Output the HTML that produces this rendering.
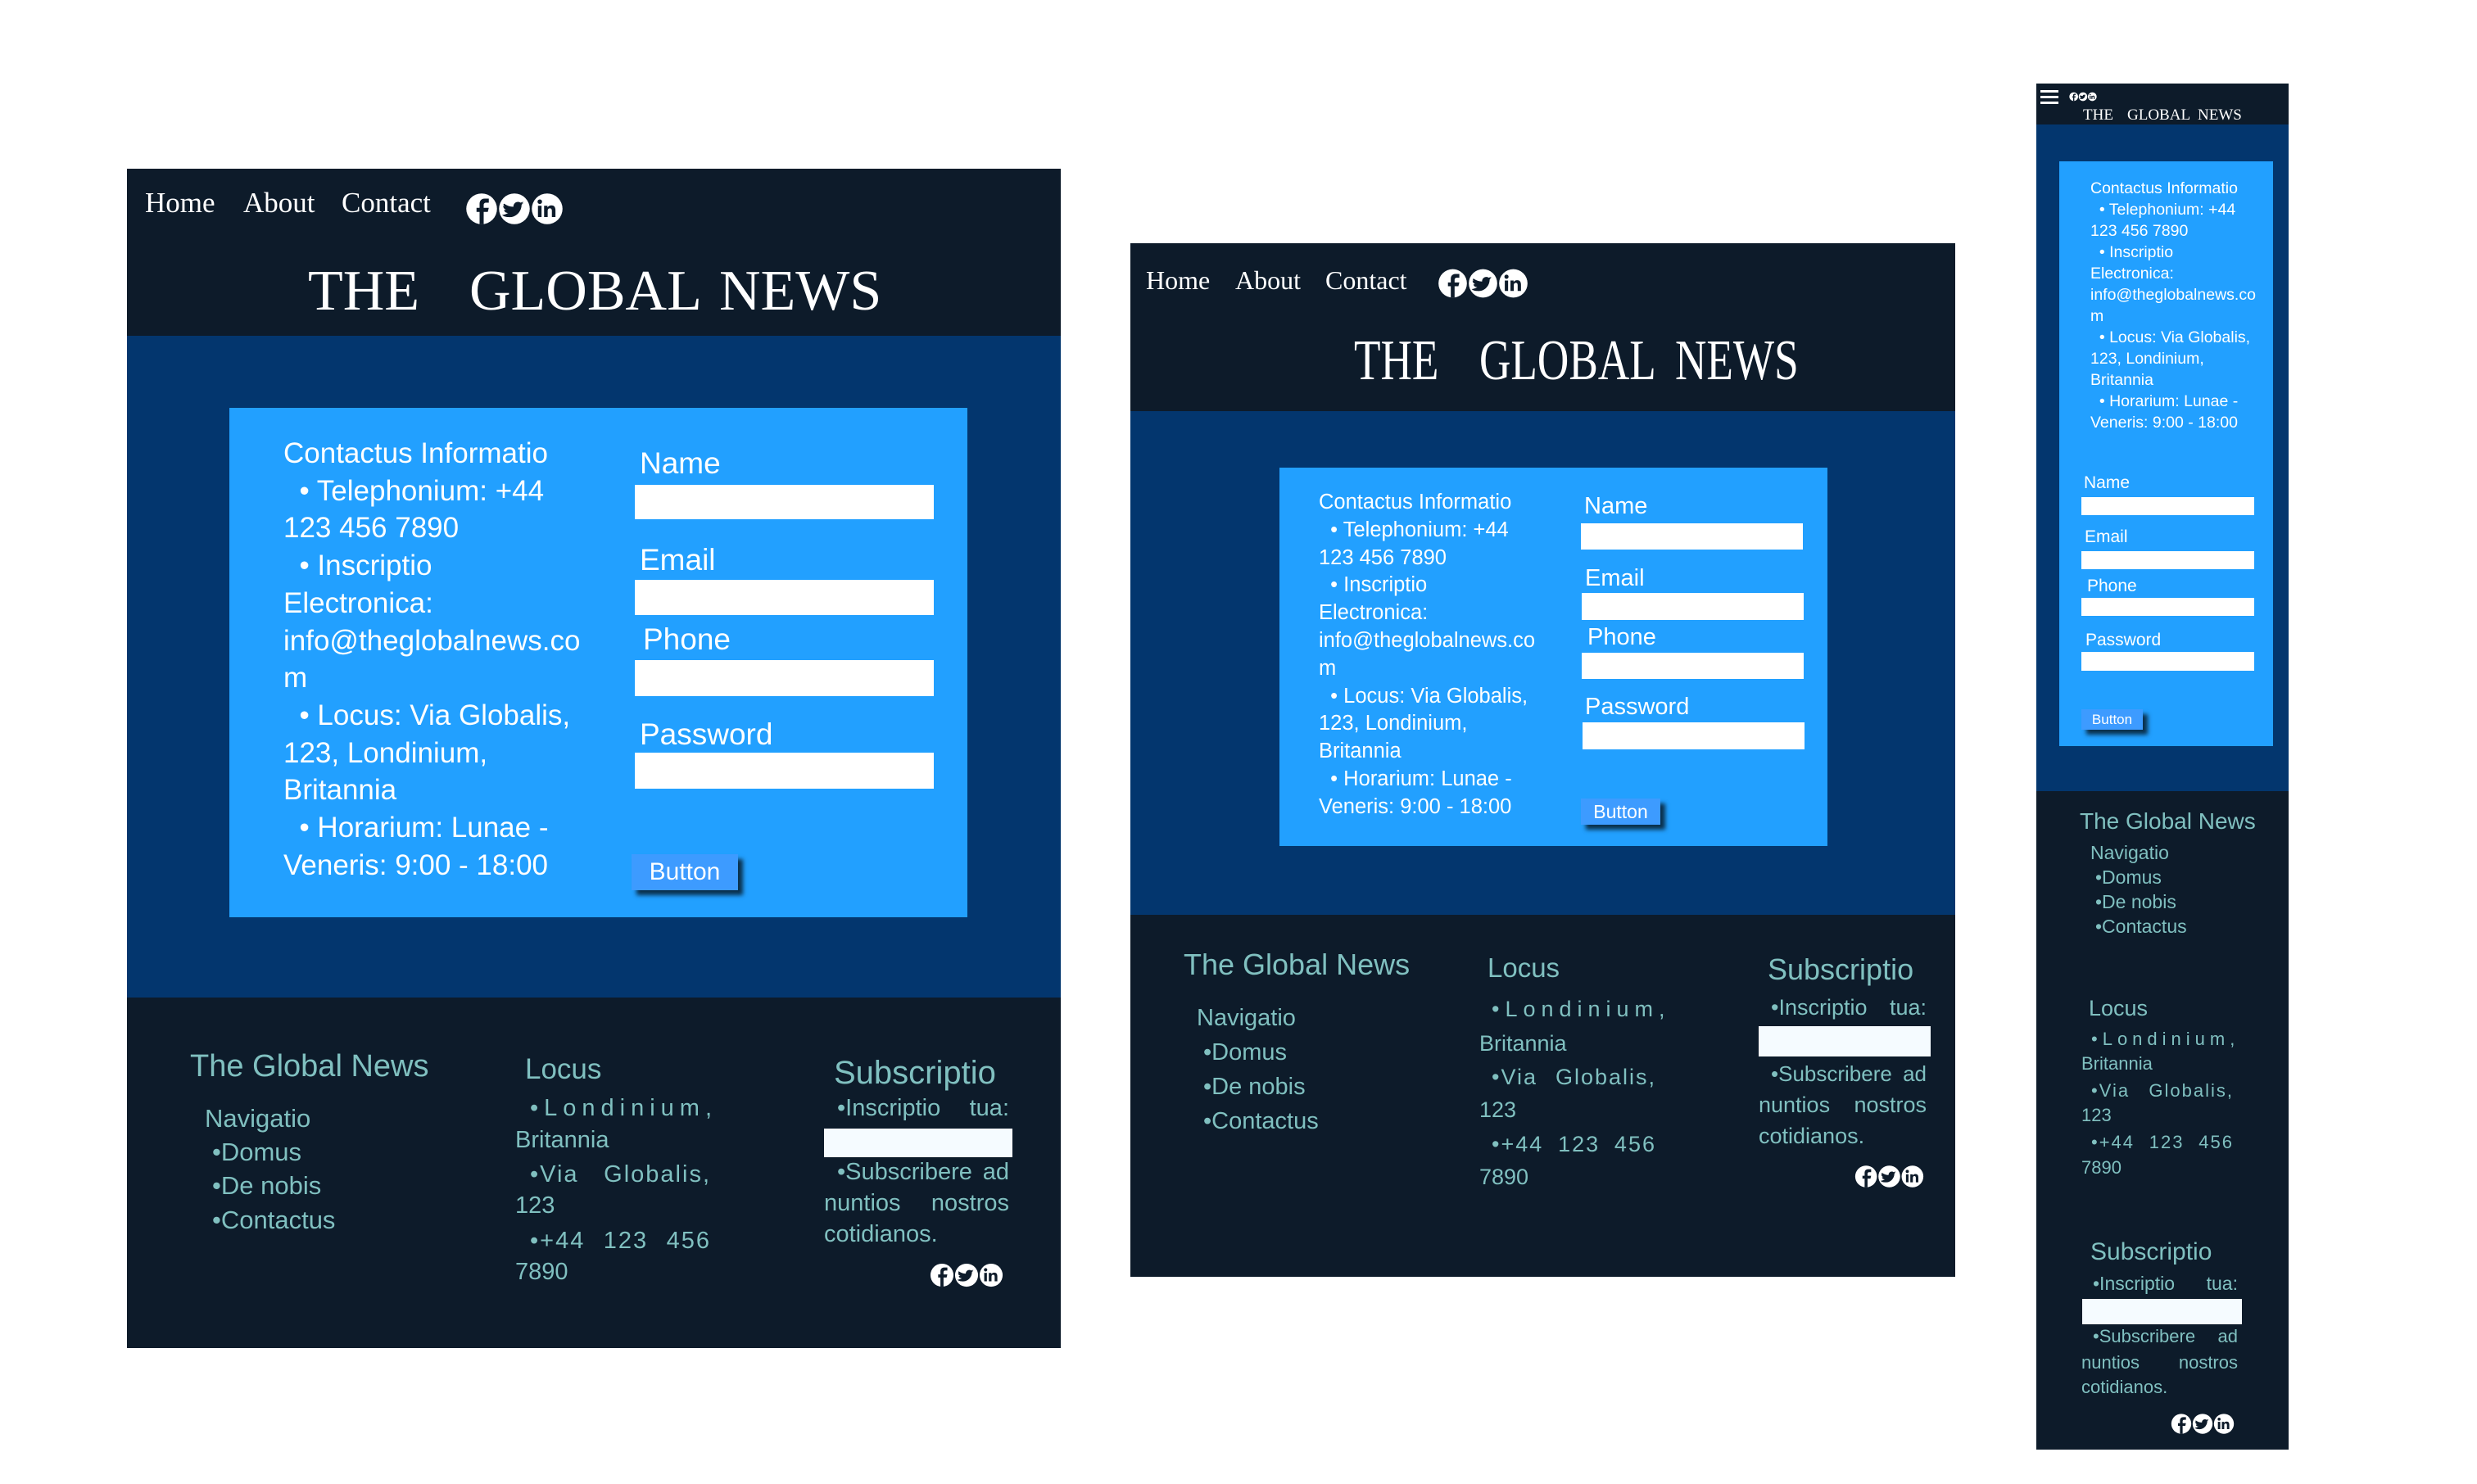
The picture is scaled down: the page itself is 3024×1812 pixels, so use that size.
<!DOCTYPE html>
<html><head><meta charset="utf-8">
<style>
*{margin:0;padding:0;box-sizing:border-box}
html,body{width:3024px;height:1812px;background:#fff;overflow:hidden;position:relative}
div,svg{position:absolute}
.t{line-height:1;white-space:pre;font-family:"Liberation Sans",sans-serif}
.s{font-family:"Liberation Serif",serif;color:#fff;line-height:1;white-space:pre}
.dk{background:#0d1b2a}
.bl{background:#03366e}
.fm{background:#22a0ff}
.w{color:#fff}
.tl{color:#80c0c0}
.in{background:#fff}
.j{line-height:1;font-family:"Liberation Sans",sans-serif;color:#80c0c0;display:flex;justify-content:space-between;white-space:nowrap}
.j span{position:static}
.btn{background:#3d9bff;color:#fff;font-family:"Liberation Sans",sans-serif;text-align:center;box-shadow:6px 6px 5px rgba(0,0,0,.7)}
.c{transform:scaleX(.76);transform-origin:0 0}
</style></head><body>
<svg width="0" height="0" style="position:absolute">
<defs>
<symbol id="ic" viewBox="0 0 96 32">
<circle cx="16" cy="16" r="15" fill="#fff"/>
<path d="M18 31V19h4l1-4h-5v-3c0-1 1-2 2-2h3V6h-4c-4 0-5 3-5 5v4h-3v4h3v12z" fill="#0d1b2a"/>
<circle cx="48" cy="16" r="15" fill="#fff"/>
<path d="M38 11c3 2 6 3 9 3 0-4 4-6 7-4l3-1-2 2 2-1-2 2c0 7-6 13-13 12-3 0-5-1-6-2 2 0 4-1 6-2-2 0-4-1-4-3h2c-2-1-3-2-3-4l2 1c-2-1-2-3-1-3z" fill="#0d1b2a"/>
<circle cx="80" cy="16" r="15" fill="#fff"/>
<rect x="71" y="13" width="3.5" height="11" fill="#0d1b2a"/>
<circle cx="72.8" cy="9" r="2.2" fill="#0d1b2a"/>
<path d="M77 13h3.3v1.6c1-1.4 2.3-2 3.8-2 3 0 4 2 4 5V24h-3.5v-6c0-1.6-.6-2.5-1.9-2.5-1.5 0-2.2 1-2.2 2.6V24H77z" fill="#0d1b2a"/>
</symbol>
</defs></svg>

<!-- PANEL 1 -->
<div class="dk" style="left:155px;top:206px;width:1140px;height:204px"></div>
<div class="bl" style="left:155px;top:410px;width:1140px;height:808px"></div>
<div class="dk" style="left:155px;top:1218px;width:1140px;height:428px"></div>
<div class="s" style="left:177px;top:230px;font-size:35px">Home</div>
<div class="s" style="left:297px;top:230px;font-size:35px">About</div>
<div class="s" style="left:417px;top:230px;font-size:35px">Contact</div>
<svg style="left:567px;top:235px" width="122" height="40"><use href="#ic"/></svg>
<div class="s" style="left:376px;top:321px;font-size:70px">THE</div>
<div class="s" style="left:573px;top:321px;font-size:70px">GLOBAL</div>
<div class="s" style="left:878px;top:321px;font-size:70px">NEWS</div>
<div class="fm" style="left:280px;top:498px;width:901px;height:622px"></div>
<div class="t w" style="left:346px;top:531px;font-size:35px;line-height:45.7px">Contactus Informatio
  • Telephonium: +44
123 456 7890
  • Inscriptio
Electronica:
info@theglobalnews.co
m
  • Locus: Via Globalis,
123, Londinium,
Britannia
  • Horarium: Lunae -
Veneris: 9:00 - 18:00</div>
<div class="t w" style="left:781px;top:547px;font-size:37px">Name</div>
<div class="in" style="left:775px;top:592px;width:365px;height:42px"></div>
<div class="t w" style="left:781px;top:665px;font-size:37px">Email</div>
<div class="in" style="left:775px;top:708px;width:365px;height:43px"></div>
<div class="t w" style="left:785px;top:762px;font-size:37px">Phone</div>
<div class="in" style="left:775px;top:806px;width:365px;height:44px"></div>
<div class="t w" style="left:781px;top:878px;font-size:37px">Password</div>
<div class="in" style="left:775px;top:919px;width:365px;height:44px"></div>
<div class="btn" style="left:771px;top:1043px;width:130px;height:44px;font-size:30px;line-height:44px">Button</div>

<div class="t tl" style="left:232px;top:1283px;font-size:38px">The Global News</div>
<div class="t tl" style="left:250px;top:1350px;font-size:31px">Navigatio</div>
<div class="t tl" style="left:259px;top:1391px;font-size:31px">•Domus</div>
<div class="t tl" style="left:259px;top:1432px;font-size:31px">•De nobis</div>
<div class="t tl" style="left:259px;top:1474px;font-size:31px">•Contactus</div>
<div class="t tl" style="left:641px;top:1288px;font-size:35px">Locus</div>
<div class="t tl" style="left:647px;top:1339px;font-size:29px;letter-spacing:7px">•Londinium,</div>
<div class="t tl" style="left:629px;top:1378px;font-size:29px">Britannia</div>
<div class="j" style="left:647px;top:1420px;width:221px;font-size:29px;letter-spacing:2px"><span>•Via</span><span>Globalis,</span></div>
<div class="t tl" style="left:629px;top:1458px;font-size:29px">123</div>
<div class="j" style="left:647px;top:1501px;width:221px;font-size:29px;letter-spacing:2px"><span>•+44</span><span>123</span><span>456</span></div>
<div class="t tl" style="left:629px;top:1539px;font-size:29px">7890</div>
<div class="t tl" style="left:1018px;top:1290px;font-size:40px">Subscriptio</div>
<div class="j" style="left:1022px;top:1339px;width:210px;font-size:29px"><span>•Inscriptio</span><span>tua:</span></div>
<div class="in" style="left:1006px;top:1378px;width:230px;height:35px;background:#f5fbff"></div>
<div class="j" style="left:1022px;top:1417px;width:210px;font-size:29px"><span>•Subscribere</span><span>ad</span></div>
<div class="j" style="left:1006px;top:1455px;width:226px;font-size:29px"><span>nuntios</span><span>nostros</span></div>
<div class="t tl" style="left:1006px;top:1493px;font-size:29px">cotidianos.</div>
<svg style="left:1133px;top:1542px" width="94" height="30"><use href="#ic"/></svg>

<!-- PANEL 2 -->
<div class="dk" style="left:1380px;top:297px;width:1007px;height:205px"></div>
<div class="bl" style="left:1380px;top:502px;width:1007px;height:615px"></div>
<div class="dk" style="left:1380px;top:1117px;width:1007px;height:442px"></div>
<div class="s" style="left:1399px;top:326px;font-size:32px">Home</div>
<div class="s" style="left:1508px;top:326px;font-size:32px">About</div>
<div class="s" style="left:1618px;top:326px;font-size:32px">Contact</div>
<svg style="left:1755px;top:326px" width="111" height="40"><use href="#ic"/></svg>
<div class="s c" style="left:1653px;top:406px;font-size:70px">THE</div>
<div class="s c" style="left:1806px;top:406px;font-size:70px">GLOBAL</div>
<div class="s c" style="left:2045px;top:406px;font-size:70px">NEWS</div>
<div class="fm" style="left:1562px;top:571px;width:669px;height:462px"></div>
<div class="t w" style="left:1610px;top:597px;font-size:25.5px;line-height:33.8px">Contactus Informatio
  • Telephonium: +44
123 456 7890
  • Inscriptio
Electronica:
info@theglobalnews.co
m
  • Locus: Via Globalis,
123, Londinium,
Britannia
  • Horarium: Lunae -
Veneris: 9:00 - 18:00</div>
<div class="t w" style="left:1934px;top:604px;font-size:29px">Name</div>
<div class="in" style="left:1930px;top:639px;width:271px;height:32px"></div>
<div class="t w" style="left:1935px;top:692px;font-size:29px">Email</div>
<div class="in" style="left:1931px;top:724px;width:271px;height:33px"></div>
<div class="t w" style="left:1938px;top:764px;font-size:29px">Phone</div>
<div class="in" style="left:1931px;top:797px;width:271px;height:32px"></div>
<div class="t w" style="left:1935px;top:849px;font-size:29px">Password</div>
<div class="in" style="left:1932px;top:882px;width:271px;height:33px"></div>
<div class="btn" style="left:1930px;top:975px;width:97px;height:32px;font-size:23px;line-height:32px">Button</div>

<div class="t tl" style="left:1445px;top:1160px;font-size:36px">The Global News</div>
<div class="t tl" style="left:1461px;top:1229px;font-size:29px">Navigatio</div>
<div class="t tl" style="left:1469px;top:1271px;font-size:29px">•Domus</div>
<div class="t tl" style="left:1469px;top:1313px;font-size:29px">•De nobis</div>
<div class="t tl" style="left:1469px;top:1355px;font-size:29px">•Contactus</div>
<div class="t tl" style="left:1816px;top:1165px;font-size:33px">Locus</div>
<div class="t tl" style="left:1821px;top:1219px;font-size:27px;letter-spacing:7px">•Londinium,</div>
<div class="t tl" style="left:1806px;top:1261px;font-size:27px">Britannia</div>
<div class="j" style="left:1821px;top:1302px;width:201px;font-size:27px;letter-spacing:2px"><span>•Via</span><span>Globalis,</span></div>
<div class="t tl" style="left:1806px;top:1342px;font-size:27px">123</div>
<div class="j" style="left:1821px;top:1384px;width:201px;font-size:27px;letter-spacing:2px"><span>•+44</span><span>123</span><span>456</span></div>
<div class="t tl" style="left:1806px;top:1424px;font-size:27px">7890</div>
<div class="t tl" style="left:2158px;top:1166px;font-size:36px">Subscriptio</div>
<div class="j" style="left:2162px;top:1217px;width:190px;font-size:27px"><span>•Inscriptio</span><span>tua:</span></div>
<div class="in" style="left:2147px;top:1253px;width:210px;height:37px;background:#f5fbff"></div>
<div class="j" style="left:2162px;top:1298px;width:190px;font-size:26px"><span>•Subscribere</span><span>ad</span></div>
<div class="j" style="left:2147px;top:1336px;width:205px;font-size:27px"><span>nuntios</span><span>nostros</span></div>
<div class="t tl" style="left:2147px;top:1374px;font-size:27px">cotidianos.</div>
<svg style="left:2264px;top:1421px" width="85" height="31"><use href="#ic"/></svg>

<!-- PANEL 3 -->
<div class="dk" style="left:2486px;top:102px;width:308px;height:50px"></div>
<div class="bl" style="left:2486px;top:152px;width:308px;height:814px"></div>
<div class="dk" style="left:2486px;top:966px;width:308px;height:804px"></div>
<div style="left:2491px;top:110px;width:22px;height:3px;background:#fff"></div>
<div style="left:2491px;top:117px;width:22px;height:3px;background:#fff"></div>
<div style="left:2491px;top:124px;width:22px;height:3px;background:#fff"></div>
<svg style="left:2526px;top:112px" width="34" height="12"><use href="#ic"/></svg>
<div class="s" style="left:2543px;top:131px;font-size:19px">THE</div>
<div class="s" style="left:2597px;top:131px;font-size:19px">GLOBAL</div>
<div class="s" style="left:2683px;top:131px;font-size:19px">NEWS</div>
<div class="fm" style="left:2514px;top:197px;width:261px;height:714px"></div>
<div class="t w" style="left:2552px;top:217px;font-size:19.5px;line-height:26px">Contactus Informatio
  • Telephonium: +44
123 456 7890
  • Inscriptio
Electronica:
info@theglobalnews.co
m
  • Locus: Via Globalis,
123, Londinium,
Britannia
  • Horarium: Lunae -
Veneris: 9:00 - 18:00</div>
<div class="t w" style="left:2544px;top:579px;font-size:21px">Name</div>
<div class="in" style="left:2541px;top:607px;width:211px;height:22px"></div>
<div class="t w" style="left:2545px;top:645px;font-size:21px">Email</div>
<div class="in" style="left:2541px;top:673px;width:211px;height:22px"></div>
<div class="t w" style="left:2548px;top:705px;font-size:21px">Phone</div>
<div class="in" style="left:2541px;top:730px;width:211px;height:22px"></div>
<div class="t w" style="left:2546px;top:771px;font-size:21px">Password</div>
<div class="in" style="left:2541px;top:796px;width:211px;height:23px"></div>
<div class="btn" style="left:2541px;top:866px;width:75px;height:25px;font-size:17px;line-height:25px">Button</div>

<div class="t tl" style="left:2539px;top:989px;font-size:28px">The Global News</div>
<div class="t tl" style="left:2552px;top:1030px;font-size:23px">Navigatio</div>
<div class="t tl" style="left:2558px;top:1060px;font-size:23px">•Domus</div>
<div class="t tl" style="left:2558px;top:1090px;font-size:23px">•De nobis</div>
<div class="t tl" style="left:2558px;top:1120px;font-size:23px">•Contactus</div>
<div class="t tl" style="left:2550px;top:1218px;font-size:27px">Locus</div>
<div class="t tl" style="left:2553px;top:1258px;font-size:22px;letter-spacing:6px">•Londinium,</div>
<div class="t tl" style="left:2541px;top:1288px;font-size:22px">Britannia</div>
<div class="j" style="left:2553px;top:1321px;width:174px;font-size:22px;letter-spacing:2px"><span>•Via</span><span>Globalis,</span></div>
<div class="t tl" style="left:2541px;top:1351px;font-size:22px">123</div>
<div class="j" style="left:2553px;top:1384px;width:174px;font-size:22px;letter-spacing:2px"><span>•+44</span><span>123</span><span>456</span></div>
<div class="t tl" style="left:2541px;top:1415px;font-size:22px">7890</div>
<div class="t tl" style="left:2552px;top:1514px;font-size:30px">Subscriptio</div>
<div class="j" style="left:2555px;top:1556px;width:177px;font-size:23px"><span>•Inscriptio</span><span>tua:</span></div>
<div class="in" style="left:2542px;top:1586px;width:195px;height:31px;background:#f5fbff"></div>
<div class="j" style="left:2555px;top:1621px;width:177px;font-size:22px"><span>•Subscribere</span><span>ad</span></div>
<div class="j" style="left:2541px;top:1653px;width:191px;font-size:22px"><span>nuntios</span><span>nostros</span></div>
<div class="t tl" style="left:2541px;top:1683px;font-size:22px">cotidianos.</div>
<svg style="left:2650px;top:1725px" width="78" height="27"><use href="#ic"/></svg>
</body></html>
